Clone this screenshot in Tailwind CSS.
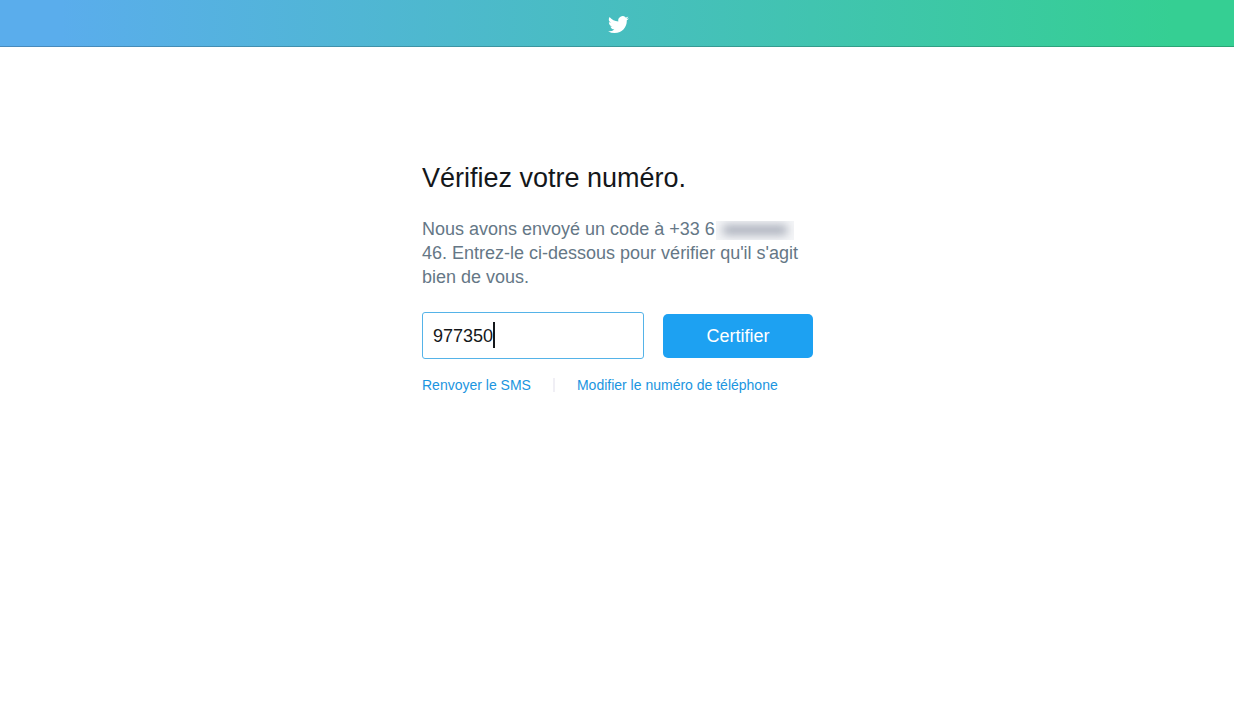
<!DOCTYPE html>
<html lang="fr">
<head>
<meta charset="utf-8">
<meta name="viewport" content="width=device-width, initial-scale=1">
<title>Vérifiez votre numéro</title>
<script src="https://cdn.jsdelivr.net/npm/@tailwindcss/browser@4"></script>
</head>
<body class="min-h-screen bg-white font-['Liberation_Sans',Arial,sans-serif] text-[#14171a]">
<header class="flex justify-center border-b border-black/20 bg-linear-to-r/srgb from-[#5aadec] from-5% to-[#35cf93] to-95% pt-3 pb-[9px]">
  <svg class="ml-0.5 size-[25px] fill-white" viewBox="0 0 24 24" role="img" aria-label="Twitter"><path d="M22 5.9a8.2 8.2 0 0 1-2.36.65 4.1 4.1 0 0 0 1.8-2.27 8.2 8.2 0 0 1-2.6 1 4.1 4.1 0 0 0-7 3.74A11.65 11.65 0 0 1 3.39 4.73a4.1 4.1 0 0 0 1.27 5.48 4.1 4.1 0 0 1-1.86-.51v.05a4.1 4.1 0 0 0 3.29 4.02 4.1 4.1 0 0 1-1.85.07 4.1 4.1 0 0 0 3.83 2.85A8.23 8.23 0 0 1 2 18.39a11.6 11.6 0 0 0 6.29 1.84c7.55 0 11.67-6.25 11.67-11.67l-.01-.53A8.3 8.3 0 0 0 22 5.9z"/></svg>
</header>
<main class="mx-auto w-full max-w-[392px] pt-[111px] pl-px">
  <h1 class="text-[27px] leading-10">Vérifiez votre numéro.</h1>
  <p class="mt-[19px] text-lg leading-6 text-[#657786]">Nous avons envoyé un code à +33 6<span class="ml-px inline-flex h-[19px] w-[78px] items-center overflow-hidden bg-[#f5f6f8] align-middle" role="img" aria-label="Chiffres masqués"><span class="mx-auto h-2.5 w-[64px] bg-[#a9aeba] blur-[5px]"></span></span> 46. Entrez-le ci-dessous pour vérifier qu'il s'agit bien de vous.</p>
  <form class="mt-[23px] flex items-center justify-between">
    <div class="relative w-[222px]">
      <input id="code" type="text" inputmode="numeric" value="977350" aria-label="Code de vérification" class="block h-[47px] w-full rounded-[3px] border border-[#55b3e8] px-2.5 pt-0.5 text-lg caret-transparent outline-none">
      <span class="absolute top-2.5 left-[71px] h-[26px] w-0.5 bg-[#14171a]"></span>
    </div>
    <button type="button" class="mt-px h-11 w-[150px] rounded-[5px] bg-[#1da1f2] text-lg text-white">Certifier</button>
  </form>
  <nav class="mt-4 flex items-center text-sm leading-5 text-[#1b95e0]">
    <a href="#renvoyer">Renvoyer le SMS</a>
    <span class="mx-[22px] h-3.5 w-0.5 bg-[#f0eff5]"></span>
    <a href="#modifier">Modifier le numéro de téléphone</a>
  </nav>
</main>
</body>
</html>
